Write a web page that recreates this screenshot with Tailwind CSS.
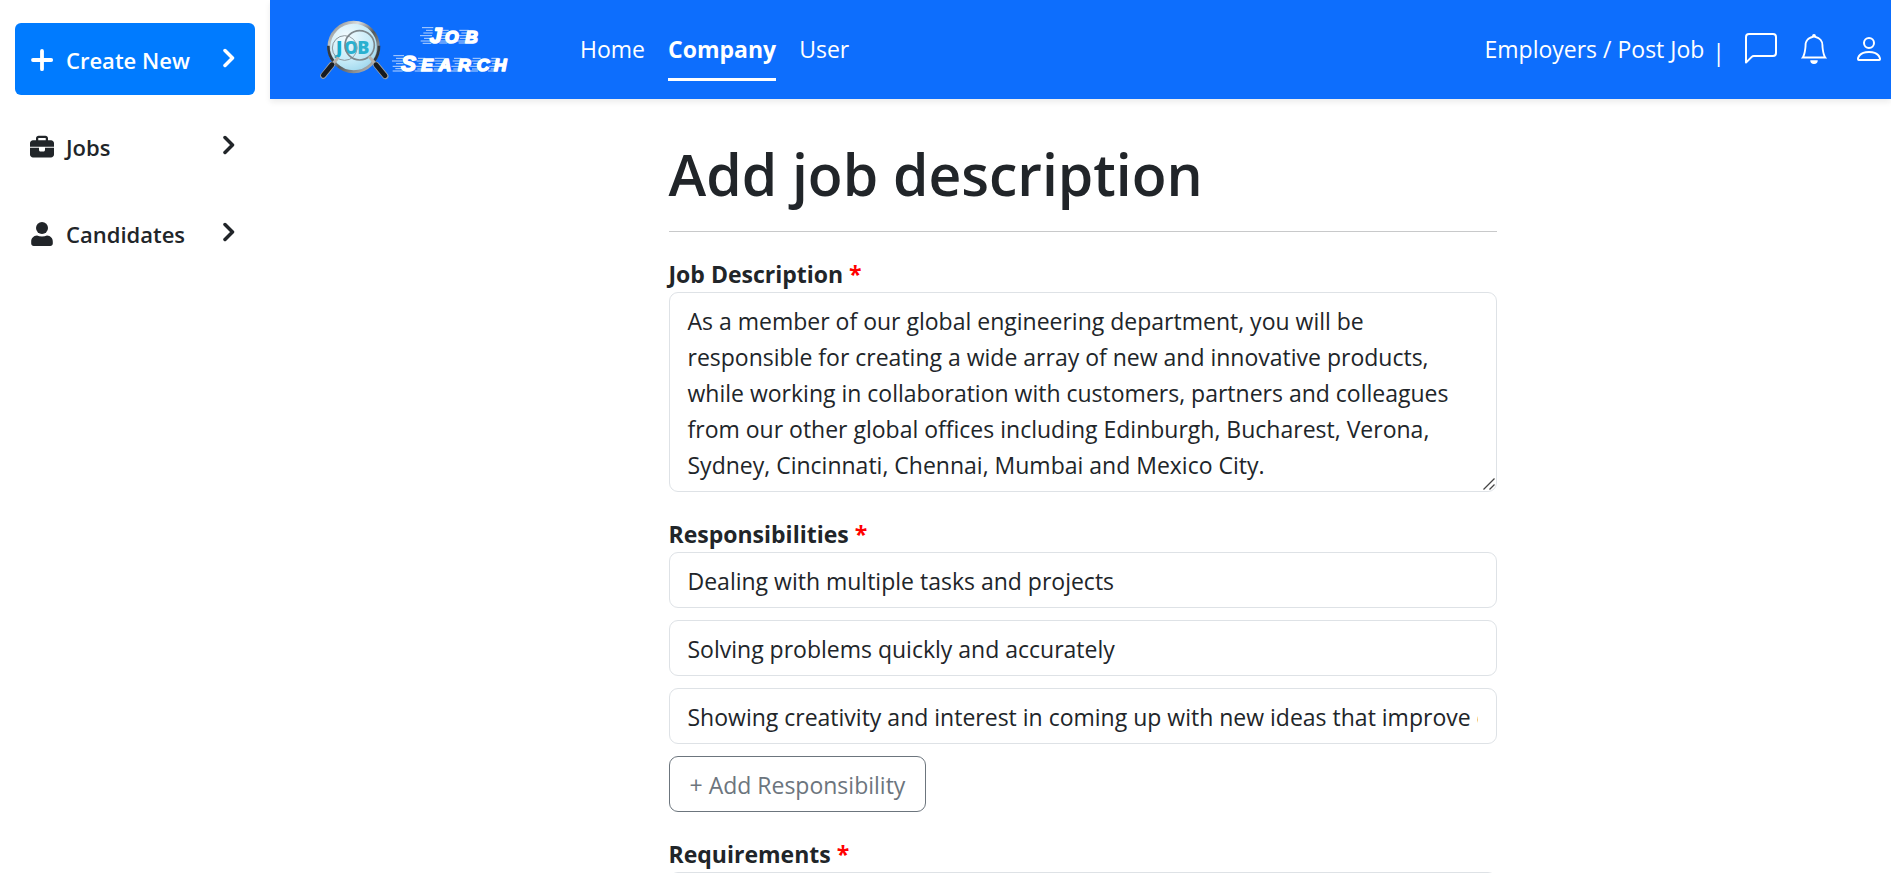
<!DOCTYPE html>
<html lang="en">
<head>
<meta charset="utf-8">
<meta name="viewport" content="width=device-width, initial-scale=1">
<title>Post Job</title>
<script src="https://cdn.jsdelivr.net/npm/@tailwindcss/browser@4"></script>
</head>
<body class="flex h-screen overflow-hidden bg-white font-['Segoe_UI','Open_Sans',sans-serif] text-[23px] leading-9 text-[#212529]">

<aside class="w-[270px] shrink-0 px-[15px] pt-[23px]">
  <nav aria-label="Sidebar" class="flex flex-col gap-[15px] text-[22px] font-semibold">
    <button type="button" class="flex h-[72px] items-center rounded-md bg-[#007bff] pl-[15px] pr-5 pt-0.5 text-white">
      <svg class="size-6 shrink-0" viewBox="0 0 24 24" fill="none" stroke="currentColor" stroke-width="3.800" stroke-linecap="round" aria-hidden="true"><path d="M12 3v18.200M3 12h18.200"/></svg>
      <span class="ml-3 grow text-left">Create New</span>
      <svg class="mb-1 h-5 w-3 shrink-0" viewBox="0 0 12 20" fill="none" stroke="currentColor" stroke-width="3.500" stroke-linecap="round" stroke-linejoin="round" aria-hidden="true"><path d="M2 2.500l7.500 7.500L2 17.500"/></svg>
    </button>
    <button type="button" class="flex h-[72px] items-center rounded-md pl-[15px] pr-5 pt-0.5">
      <svg class="size-6 shrink-0" viewBox="0 -16 512 512" fill="currentColor" aria-hidden="true"><path d="M176 56V96H336V56c0-4.400-3.600-8-8-8H184c-4.400 0-8 3.600-8 8zM128 96V56c0-30.900 25.100-56 56-56H328c30.900 0 56 25.100 56 56V96h64c35.300 0 64 28.700 64 64V232H0V160c0-35.300 28.700-64 64-64zM0 256H192v48c0 17.700 14.300 32 32 32h64c17.700 0 32-14.300 32-32V256H512V400c0 35.300-28.700 64-64 64H64c-35.300 0-64-28.700-64-64z"/></svg>
      <span class="ml-3 grow text-left">Jobs</span>
      <svg class="mb-1 h-5 w-3 shrink-0" viewBox="0 0 12 20" fill="none" stroke="currentColor" stroke-width="3.500" stroke-linecap="round" stroke-linejoin="round" aria-hidden="true"><path d="M2 2.500l7.500 7.500L2 17.500"/></svg>
    </button>
    <button type="button" class="flex h-[72px] items-center rounded-md pl-[15px] pr-5 pt-0.5">
      <svg class="size-6 shrink-0" viewBox="0 0 24 24" fill="currentColor" aria-hidden="true"><circle cx="12" cy="6" r="6"/><path d="M7 13.500c1.500.600 3.200 1 5 1s3.500-.400 5-1c3.600.300 5.800 2.800 5.800 6.200V21.500c0 1.400-1.100 2.500-2.500 2.500H3.700c-1.400 0-2.500-1.100-2.500-2.500v-1.800c0-3.400 2.200-5.900 5.800-6.200z"/></svg>
      <span class="ml-3 grow text-left">Candidates</span>
      <svg class="mb-1 h-5 w-3 shrink-0" viewBox="0 0 12 20" fill="none" stroke="currentColor" stroke-width="3.500" stroke-linecap="round" stroke-linejoin="round" aria-hidden="true"><path d="M2 2.500l7.500 7.500L2 17.500"/></svg>
    </button>
  </nav>
</aside>

<div class="flex min-w-0 grow flex-col">
  <header class="flex h-[99px] shrink-0 items-center bg-[#0d6efd] pl-12 pr-[6px] text-white shadow-[0_3px_6px_rgba(0,0,0,0.08)]">
    <a href="#" aria-label="Job Search" class="shrink-0">
      <svg class="h-[66px] w-48" viewBox="54 51 576 198" aria-hidden="true">
        <defs>
          <linearGradient id="rim" x1="0" y1="0" x2="1" y2="1"><stop offset="0" stop-color="#6f767b"/><stop offset=".3" stop-color="#d9dcdd"/><stop offset=".55" stop-color="#55595c"/><stop offset="1" stop-color="#c9cbcc"/></linearGradient>
          <radialGradient id="lens" cx=".35" cy=".3" r=".85"><stop offset="0" stop-color="#f4fcff"/><stop offset=".6" stop-color="#c2e9f7"/><stop offset="1" stop-color="#8fd0ea"/></radialGradient>
        </defs>
        <circle cx="161" cy="141" r="74" fill="url(#lens)" stroke="url(#rim)" stroke-width="9"/>
        <path d="M85 137a75 75 0 0 0 16 48M237 137a75 75 0 0 1-16 48" fill="none" stroke="#333a40" stroke-width="8"/>
        <text y="162" x="108 131 172" font-family="Open Sans, sans-serif" font-weight="800" font-size="54" fill="#16aacb">JOB</text>
        <circle cx="134" cy="144" r="37" fill="none" stroke="#8b979d" stroke-width="3"/>
        <circle cx="179" cy="136" r="44" fill="#dff6fc" fill-opacity=".1" stroke="#7d878c" stroke-width="5"/>
        <g stroke-linecap="round">
          <path d="M113 175L94 196M209 172L230 196" stroke="#b8b3ac" stroke-width="9"/>
          <path d="M95 195L70 227M229 195L256 228" stroke="#9aa0a6" stroke-width="19"/>
          <path d="M96 194L70 226M228 194L255 227" stroke="#171b20" stroke-width="14"/>
        </g>
        <!-- speed lines trailing each letter -->
        <g stroke="#fff" stroke-width="2.500" stroke-opacity=".85">
          <path d="M366 83h34M378 91h20M370 99h28M360 107h36M372 115h22M362 123h32M368 130h26"/>
          <path d="M418 91h28M424 99h20M416 107h24M422 115h20M412 123h28M418 129h24M478 91h28M484 99h20M474 107h28M480 115h20M470 123h28M476 129h20"/>
          <path d="M280 167h32M288 175h22M276 183h32M288 191h22M278 199h34M286 206h22M278 213h30"/>
          <path d="M354 175h22M350 183h24M356 191h16M346 199h24M352 207h16M344 213h24M404 175h30M400 183h28M406 191h20M396 199h24M402 207h16M394 213h20M462 175h22M458 183h24M464 191h16M454 199h24M460 207h16M452 213h22M518 175h24M514 183h24M520 191h16M510 199h24M516 207h18M508 213h26M574 175h22M570 183h24M576 191h16M566 199h24M572 207h16M564 213h22"/>
        </g>
        <g fill="#fff" stroke="#fff" stroke-width="5" stroke-linejoin="round" font-family="Liberation Sans, Arial, sans-serif" font-weight="bold" font-style="italic">
          <text y="129" font-size="64" x="389">J</text>
          <text y="129" font-size="52" x="435 496">OB</text>
          <text y="213" font-size="66" x="304">S</text>
          <text y="213" font-size="52" x="364 416 474 530 582">EARCH</text>
        </g>
      </svg>
    </a>
    <nav aria-label="Main" class="ml-[70px] flex gap-[23px] pt-3">
      <a href="#" class="border-b-[3px] border-transparent pb-[11px]">Home</a>
      <a href="#" aria-current="page" class="border-b-[3px] border-white pb-[11px] font-bold">Company</a>
      <a href="#" class="border-b-[3px] border-transparent pb-[11px]">User</a>
    </nav>
    <div class="ml-auto flex items-center pb-0.5">
      <span>Employers / Post Job</span>
      <span class="ml-2 mt-[6px]" aria-hidden="true">|</span>
      <button type="button" aria-label="Messages" class="ml-5">
        <svg class="size-8" viewBox="0 0 16 16" fill="currentColor" aria-hidden="true"><path d="M14 1a1 1 0 0 1 1 1v8a1 1 0 0 1-1 1H4.414A2 2 0 0 0 3 11.586l-2 2V2a1 1 0 0 1 1-1zM2 0a2 2 0 0 0-2 2v12.793a.5.5 0 0 0 .854.353l2.853-2.853A1 1 0 0 1 4.414 12H14a2 2 0 0 0 2-2V2a2 2 0 0 0-2-2z"/></svg>
      </button>
      <button type="button" aria-label="Notifications" class="ml-[22px]">
        <svg class="size-[30px]" viewBox="0 0 16 16" fill="currentColor" aria-hidden="true"><path d="M8 16a2 2 0 0 0 2-2H6a2 2 0 0 0 2 2M8 1.918l-.797.161A4 4 0 0 0 4 6c0 .628-.134 2.197-.459 3.742-.16.767-.376 1.566-.663 2.258h10.244c-.287-.692-.502-1.49-.663-2.258C12.134 8.197 12 6.628 12 6a4 4 0 0 0-3.203-3.92zM14.22 12c.223.447.481.801.78 1H1c.299-.199.557-.553.78-1C2.68 10.2 3 6.88 3 6c0-2.42 1.72-4.44 4.005-4.901a1 1 0 1 1 1.99 0A5 5 0 0 1 13 6c0 .88.32 4.2 1.22 6"/></svg>
      </button>
      <button type="button" aria-label="Account" class="ml-6">
        <svg class="size-8" viewBox="0 0 16 16" fill="currentColor" aria-hidden="true"><path d="M8 8a3 3 0 1 0 0-6 3 3 0 0 0 0 6m2-3a2 2 0 1 1-4 0 2 2 0 0 1 4 0m4 8c0 1-1 1-1 1H3s-1 0-1-1 1-4 6-4 6 3 6 4m-1-.004c-.001-.246-.154-.986-.832-1.664C11.516 10.680 10.289 10 8 10s-3.516.680-4.168 1.332c-.678.678-.830 1.418-.832 1.664z"/></svg>
      </button>
    </div>
  </header>

  <main class="flex min-h-0 grow justify-center overflow-hidden pl-1">
    <form class="w-full max-w-[828px] pt-[39px]">
      <h1 class="border-b border-[#c8c9ca] pb-[21px] text-[57px] font-semibold leading-[72px]">Add job description</h1>
      <div class="mt-6 flex flex-col gap-6">
        <div>
          <label for="description" class="block text-[23px] font-bold">Job Description <span class="text-[#ff0000]">*</span></label>
          <div class="relative">
            <textarea id="description" rows="5" class="block h-[200px] w-full resize rounded-[9px] border border-[#dee2e6] px-[18px] pb-2 pt-[10px] [&::-webkit-resizer]:hidden">As a member of our global engineering department, you will be responsible for creating a wide array of new and innovative products, while working in collaboration with customers, partners and colleagues from our other global offices including Edinburgh, Bucharest, Verona, Sydney, Cincinnati, Chennai, Mumbai and Mexico City.</textarea>
            <svg class="pointer-events-none absolute bottom-0.5 right-0.5 size-3" viewBox="0 0 12 12" stroke="#444" stroke-width="1.300" aria-hidden="true"><path d="M.5 11.500l11-11M6.500 11.500l5-5"/></svg>
          </div>
        </div>
        <div>
          <label for="resp1" class="block text-[23px] font-bold">Responsibilities <span class="text-[#ff0000]">*</span></label>
          <div class="flex flex-col items-start gap-3">
            <input id="resp1" type="text" value="Dealing with multiple tasks and projects" class="h-14 w-full rounded-[9px] border border-[#dee2e6] px-[18px] pt-0.5">
            <input type="text" aria-label="Responsibility 2" value="Solving problems quickly and accurately" class="h-14 w-full rounded-[9px] border border-[#dee2e6] px-[18px] pt-0.5">
            <input type="text" aria-label="Responsibility 3" value="Showing creativity and interest in coming up with new ideas that improve our products" class="h-14 w-full rounded-[9px] border border-[#dee2e6] px-[18px] pt-0.5">
            <button type="button" class="h-14 rounded-[9px] border border-[#6c757d] px-5 pt-0.5 text-[#6c757d]">+ Add Responsibility</button>
          </div>
        </div>
        <div>
          <label for="req1" class="block text-[23px] font-bold">Requirements <span class="text-[#ff0000]">*</span></label>
          <input id="req1" type="text" class="block h-14 w-full rounded-[9px] border border-[#dee2e6] px-[18px]">
        </div>
      </div>
    </form>
  </main>
</div>
</body>
</html>
